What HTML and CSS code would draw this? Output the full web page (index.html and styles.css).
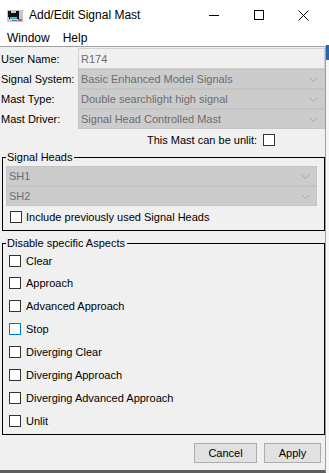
FILE: index.html
```html
<!DOCTYPE html>
<html lang="en">
<head>
  <meta charset="UTF-8" />
  <meta name="viewport" content="width=device-width, initial-scale=1.0" />
  <title>Add/Edit Signal Mast</title>
  <link rel="stylesheet" href="styles.css">
</head>
<body>
  <div class="screen">
    <div class="window">
      <div class="titlebar">
        <svg class="app-icon" width="16" height="12" viewBox="0 0 16 12" shape-rendering="crispEdges">
          <rect x="0" y="0" width="16" height="12" fill="#c8c8c8"/>
          <rect x="1" y="1" width="3" height="2" fill="#111"/>
          <rect x="1" y="3" width="11" height="4" fill="#111"/>
          <rect x="9" y="1" width="3" height="2" fill="#111"/>
          <rect x="3" y="7" width="7" height="2" fill="#2cc6d6"/>
          <rect x="2" y="7" width="1" height="2" fill="#111"/>
          <rect x="10" y="7" width="2" height="2" fill="#111"/>
          <rect x="11" y="9" width="4" height="2" fill="#d040c0"/>
          <rect x="5" y="10" width="5" height="1" fill="#7a7a7a"/>
        </svg>
        <span class="title">Add/Edit Signal Mast</span>
        <div class="controls">
          <span class="ctl">
            <svg width="10" height="10" viewBox="0 0 10 10"><line x1="0" y1="5.5" x2="10" y2="5.5" stroke="#000"/></svg>
          </span>
          <span class="ctl">
            <svg width="10" height="10" viewBox="0 0 10 10"><rect x="0.5" y="0.5" width="9" height="9" fill="none" stroke="#000"/></svg>
          </span>
          <span class="ctl">
            <svg width="11" height="11" viewBox="0 0 11 11"><path d="M0.5 0.5 L10.5 10.5 M10.5 0.5 L0.5 10.5" stroke="#000"/></svg>
          </span>
        </div>
      </div>
      <div class="menubar">
        <span class="menu-item">Window</span>
        <span class="menu-item">Help</span>
      </div>

      <div class="panel">
        <div class="row first">
          <label>User Name:</label>
          <div class="field text">R174</div>
        </div>
        <div class="row">
          <label>Signal System:</label>
          <div class="field combo">Basic Enhanced Model Signals<svg class="chev" width="9" height="5" viewBox="0 0 9 5"><polyline points="0.5,0.5 4.5,4.5 8.5,0.5" fill="none" stroke="#a6a6a6"/></svg></div>
        </div>
        <div class="row">
          <label>Mast Type:</label>
          <div class="field combo">Double searchlight high signal<svg class="chev" width="9" height="5" viewBox="0 0 9 5"><polyline points="0.5,0.5 4.5,4.5 8.5,0.5" fill="none" stroke="#a6a6a6"/></svg></div>
        </div>
        <div class="row">
          <label>Mast Driver:</label>
          <div class="field combo">Signal Head Controlled Mast<svg class="chev" width="9" height="5" viewBox="0 0 9 5"><polyline points="0.5,0.5 4.5,4.5 8.5,0.5" fill="none" stroke="#a6a6a6"/></svg></div>
        </div>
        <div class="unlit">
          <span>This Mast can be unlit:</span>
          <span class="box"></span>
        </div>

        <fieldset class="group heads">
          <legend>Signal Heads</legend>
          <div class="field combo">SH1<svg class="chev" width="9" height="5" viewBox="0 0 9 5"><polyline points="0.5,0.5 4.5,4.5 8.5,0.5" fill="none" stroke="#a6a6a6"/></svg></div>
          <div class="field combo">SH2<svg class="chev" width="9" height="5" viewBox="0 0 9 5"><polyline points="0.5,0.5 4.5,4.5 8.5,0.5" fill="none" stroke="#a6a6a6"/></svg></div>
          <div class="check">
            <span class="box"></span>
            <span>Include previously used Signal Heads</span>
          </div>
        </fieldset>

        <fieldset class="group aspects">
          <legend>Disable specific Aspects</legend>
          <div class="check"><span class="box"></span><span>Clear</span></div>
          <div class="check"><span class="box"></span><span>Approach</span></div>
          <div class="check"><span class="box"></span><span>Advanced Approach</span></div>
          <div class="check"><span class="box hover"></span><span>Stop</span></div>
          <div class="check"><span class="box"></span><span>Diverging Clear</span></div>
          <div class="check"><span class="box"></span><span>Diverging Approach</span></div>
          <div class="check"><span class="box"></span><span>Diverging Advanced Approach</span></div>
          <div class="check"><span class="box"></span><span>Unlit</span></div>
        </fieldset>

        <div class="buttons">
          <button class="btn cancel">Cancel</button>
          <button class="btn apply">Apply</button>
        </div>
      </div>
    </div>
    <div class="edge"></div>
  </div>
</body>
</html>
```

FILE: styles.css
```css
body {
  margin: 0;
  font-family: "Liberation Sans", Arial, sans-serif;
  font-size: 11px;
  color: #000;
  background: #fff;
}
.screen {
  display: flex;
  width: 329px;
  height: 473px;
}
.window {
  width: 326px;
  display: flex;
  flex-direction: column;
  background: #f0f0f0;
}
.edge {
  flex: 1;
  background: linear-gradient(#fff 0 45px, #2a66b0 45px 60px, #f6f6f6 60px);
}
.titlebar {
  height: 30px;
  background: #fff;
  display: flex;
  align-items: center;
}
.app-icon {
  margin-left: 7px;
  margin-top: 1px;
}
.title {
  margin-left: 6px;
  font-size: 12px;
}
.controls {
  margin-left: auto;
  display: flex;
  align-self: stretch;
}
.ctl {
  width: 45px;
  display: flex;
  align-items: center;
  justify-content: center;
}
.ctl svg {
  display: block;
}
.menubar {
  height: 16px;
  background: #fff;
  display: flex;
  align-items: center;
  padding-left: 7px;
  font-size: 12px;
}
.menu-item {
  margin-right: 13px;
}
.panel {
  flex: 1;
  border-top: 1px solid #a0a0a0;
  border-right: 1px solid #a0a0a0;
  border-bottom: 3px solid #5f5f5f;
  padding: 1px 0 0 1px;
  display: flex;
  flex-direction: column;
}
.row {
  display: flex;
  align-items: center;
  height: 20px;
}
.row.first {
  height: 21px;
}
.row label {
  width: 77px;
  flex-shrink: 0;
}
.field {
  box-sizing: border-box;
  display: flex;
  align-items: center;
  padding-left: 2px;
  color: #6d6d6d;
}
.row .field {
  flex: 1;
  height: 100%;
}
.field.text {
  border: 1px solid #d2d2d2;
  background: #f0f0f0;
}
.field.combo {
  background: #cccccc;
  border: 1px solid #c4c4c4;
}
.chev {
  margin-left: auto;
  margin-right: 6px;
}
.unlit {
  height: 21px;
  display: flex;
  align-items: center;
  gap: 6px;
  padding-left: 146px;
}
.box {
  width: 12px;
  height: 12px;
  box-sizing: border-box;
  border: 1px solid #333;
  background: #fff;
  flex-shrink: 0;
}
.box.hover {
  border-color: #0078d7;
}
.group {
  margin: 1px 0 0 1px;
  border: 1px solid #000;
  padding: 0 7px 2px 3px;
  min-width: 0;
}
.group legend {
  padding: 0 2px 0 1px;
  margin: 0;
  font-size: 11px;
  line-height: 13px;
}
.heads {
  padding-top: 2px;
}
.heads .field {
  height: 20px;
}
.heads .check {
  height: 22px;
  padding-left: 4px;
  gap: 4px;
}
.check {
  display: flex;
  align-items: center;
}
.aspects {
  margin-top: 6px;
  padding-top: 0;
  padding-bottom: 2px;
}
.aspects .check {
  height: 23px;
  padding-left: 3px;
  gap: 5px;
}
.aspects .check:first-of-type {
  height: 21px;
}
.buttons {
  margin-top: 8px;
  display: flex;
  justify-content: flex-end;
  gap: 7px;
  padding-right: 4px;
}
.btn {
  height: 20px;
  font-family: inherit;
  font-size: 11px;
  background: #e1e1e1;
  border: 1px solid #adadad;
  padding: 0;
  color: #000;
}
.cancel {
  width: 63px;
}
.apply {
  width: 57px;
}
```
